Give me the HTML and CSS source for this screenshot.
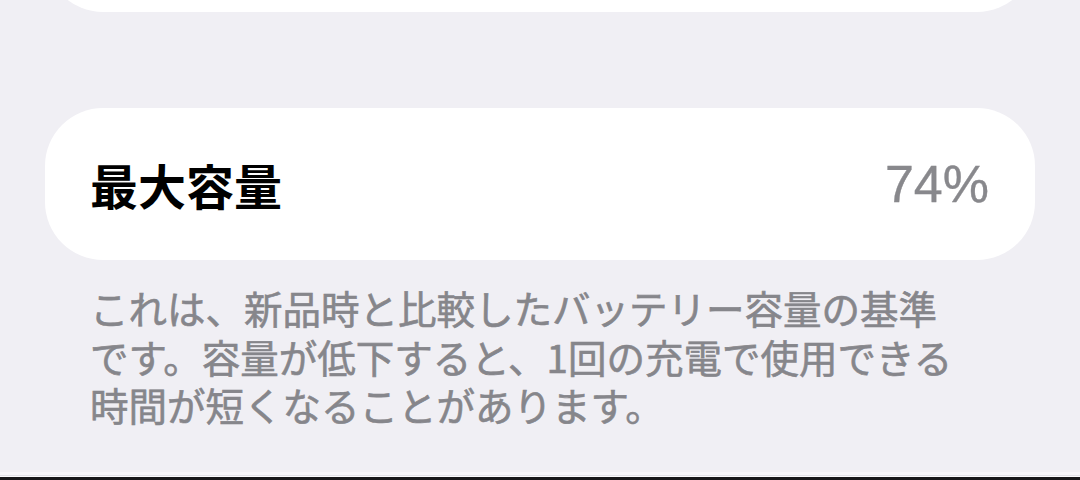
FILE: index.html
```html
<!DOCTYPE html>
<html lang="ja">
<head>
<meta charset="utf-8">
<title>バッテリーの状態</title>
<link rel="stylesheet" href="styles.css">
</head>
<body>
<main class="screen">
  <div class="group group-prev"></div>
  <section class="group capacity">
    <span class="capacity-label">最大容量</span>
    <span class="capacity-value">74%</span>
  </section>
  <p class="footnote">これは、新品時と比較したバッテリー容量の基準<br>です。容量が低下すると、1回の充電で使用できる<br>時間が短くなることがあります。</p>
  <div class="edge"></div>
</main>
</body>
</html>
```

FILE: styles.css
```css
html, body {
  margin: 0;
  padding: 0;
  background: #f0eff4;
}

.screen {
  height: 480px;
  overflow: hidden;
  display: flex;
  flex-direction: column;
  padding: 0 45px;
  box-sizing: border-box;
  font-family: "Noto Sans CJK JP", "Noto Sans", sans-serif;
}

.group {
  background: #ffffff;
  border-radius: 58px;
  flex: 0 0 auto;
}

/* previous grouped list, mostly scrolled out of view */
.group-prev {
  height: 152px;
  margin-top: -140px;
}

.capacity {
  height: 152px;
  margin-top: 96px;
  display: flex;
  align-items: center;
  justify-content: space-between;
  padding: 0 46px 0 45px;
}

.capacity-label {
  font-size: 48px;
  font-weight: 700;
  color: #000000;
}

.capacity-value {
  font-family: "Liberation Sans", Arial, sans-serif;
  font-size: 52px;
  font-weight: 400;
  color: #88888c;
  -webkit-text-stroke: 0.4px #88888c;
}

.footnote {
  margin: 23px 0 0;
  padding: 0 45px;
  font-size: 38.5px;
  font-weight: 400;
  line-height: 48.5px;
  color: #86868b;
  -webkit-text-stroke: 0.6px #86868b;
  white-space: nowrap;
}

/* thin separator strip at the very bottom of the screen */
.edge {
  margin: auto -45px 0;
  height: 8px;
  background: linear-gradient(to bottom,
    #f6f5f9 0, #f6f5f9 3px,
    #e2e1e7 3px, #e2e1e7 4px,
    #fbfbfd 4px, #fbfbfd 5px,
    #17171a 5px);
}
```
